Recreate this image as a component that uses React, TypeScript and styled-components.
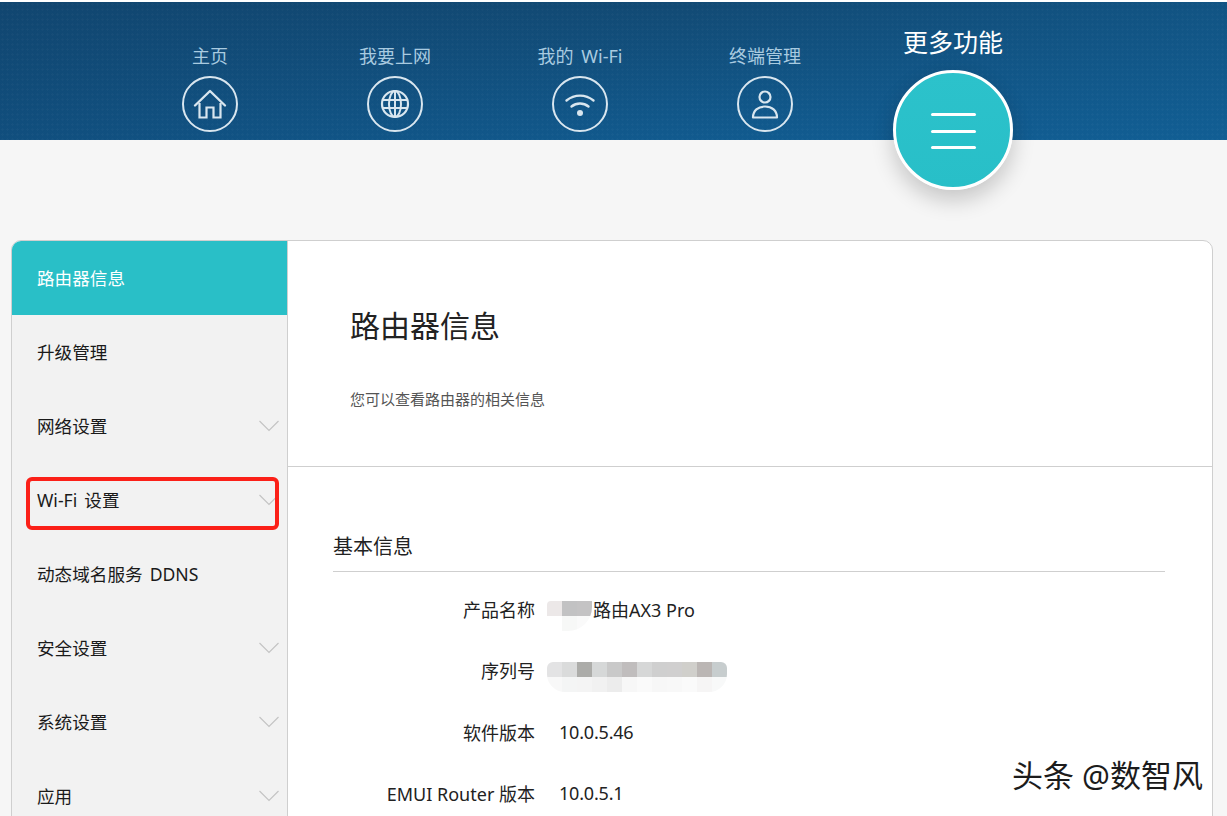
import React from 'react';
import styled, { createGlobalStyle } from 'styled-components';

const FONT = `"Noto Sans", "Noto Sans CJK SC", sans-serif`;

const GlobalStyle = createGlobalStyle`
  html, body {
    margin: 0;
    padding: 0;
    height: 100%;
    overflow: hidden;
    background: #f6f6f6;
    font-family: ${FONT};
  }
`;

const Page = styled.div`
  position: relative;
  height: 816px;
  overflow: hidden;
  padding-top: 2px;
  box-sizing: border-box;
  background: #fff;
`;

const Body = styled.div`
  background: #f6f6f6;
  height: 814px;
`;

const Header = styled.header`
  display: grid;
  grid-template-columns: repeat(5, 185px);
  height: 138px;
  padding-left: 117px;
  box-sizing: border-box;
  background-color: #115a8e;
  background-image:
    radial-gradient(rgba(255, 255, 255, 0.022) 1px, transparent 1.4px),
    linear-gradient(100deg, rgba(16, 66, 108, 0.5) 0%, rgba(17, 90, 142, 0) 55%, rgba(17, 100, 156, 0.4) 100%),
    linear-gradient(180deg, #124a74 0%, #115a8e 100%);
  background-size: 5px 5px, 100% 100%, 100% 100%;
`;

const NavItem = styled.div`
  display: flex;
  flex-direction: column;
  align-items: center;
  padding-top: 41px;
`;

const NavLabel = styled.div`
  font-size: 18px;
  line-height: 26px;
  height: 26px;
  padding-left: 1px;
  word-spacing: 3px;
  color: #a9cbe0;
  white-space: nowrap;
`;

const NavCircle = styled.div`
  width: 56px;
  height: 56px;
  margin-top: 7px;
  color: #d9e6ef;
`;

const MoreItem = styled.div`
  display: flex;
  flex-direction: column;
  align-items: center;
  padding: 22px 0 0 7px;
  position: relative;
  z-index: 1;
`;

const MoreLabel = styled.div`
  font-size: 25px;
  line-height: 36px;
  color: #fff;
  white-space: nowrap;
`;

const MoreButton = styled.div`
  width: 120px;
  height: 120px;
  flex: none;
  margin-top: 10px;
  box-sizing: border-box;
  border: 3px solid #fff;
  border-radius: 50%;
  background: linear-gradient(180deg, #2cc2cb 0%, #28bfc8 100%);
  box-shadow: 0 10px 22px rgba(0, 0, 0, 0.2);
  display: flex;
  flex-direction: column;
  align-items: center;
  justify-content: center;
  gap: 13.3px;
  padding-top: 2px;
`;

const MoreBar = styled.span`
  display: block;
  width: 45px;
  height: 3px;
  border-radius: 2px;
  background: #fff;
`;

const Card = styled.main`
  display: grid;
  grid-template-columns: 276px 1fr;
  margin: 100px 14px 0 11px;
  height: 700px;
  box-sizing: border-box;
  background: #fff;
  border: 1px solid #cfcfcf;
  border-radius: 10px;
  overflow: hidden;
`;

const Sidebar = styled.nav`
  background: #f2f2f2;
  border-right: 1px solid #cfcfcf;
`;

const SideItem = styled.div<{ $active?: boolean }>`
  position: relative;
  display: flex;
  align-items: center;
  justify-content: space-between;
  height: 74px;
  box-sizing: border-box;
  padding: 0 8px 2px 25px;
  font-size: 17.6px;
  word-spacing: 2.5px;
  color: ${(p) => (p.$active ? '#fff' : '#1a1a1a')};
  background: ${(p) => (p.$active ? '#29bfc7' : 'transparent')};
`;

const Highlight = styled.div`
  position: absolute;
  left: 14px;
  right: 8px;
  top: 14px;
  bottom: 7px;
  border: 4px solid #fb2018;
  border-radius: 6px;
`;

const ChevronSvg = styled.svg`
  margin-top: 2px;
  fill: none;
  stroke: #c4c4c4;
  stroke-width: 1.2;
`;

const Content = styled.section`
  min-width: 0;
`;

const Intro = styled.div`
  height: 226px;
  box-sizing: border-box;
  padding: 61px 0 0 62px;
  border-bottom: 1px solid #cfcfcf;
`;

const Title = styled.h1`
  margin: 0;
  font-size: 30px;
  font-weight: 400;
  line-height: 48px;
  color: #222;
`;

const Subtitle = styled.p`
  margin: 38px 0 0;
  font-size: 15px;
  line-height: 22px;
  color: #555;
`;

const Section = styled.div`
  margin: 60px 47px 0 45px;
`;

const SectionTitle = styled.h2`
  margin: 0;
  height: 45px;
  box-sizing: border-box;
  font-size: 20px;
  font-weight: 400;
  line-height: 40px;
  color: #222;
  border-bottom: 1px solid #cfcfcf;
`;

const InfoList = styled.div`
  padding-top: 6.5px;
`;

const InfoRow = styled.div`
  display: grid;
  grid-template-columns: 202px 1fr;
  column-gap: 12px;
  align-items: center;
  height: 61.3px;
  font-size: 18px;
  color: #222;
`;

const InfoLabel = styled.div`
  text-align: right;
  white-space: nowrap;
`;

const InfoValue = styled.div<{ $flush?: boolean }>`
  display: flex;
  align-items: center;
  padding-left: ${(p) => (p.$flush ? 0 : 12)}px;
  letter-spacing: ${(p) => (p.$flush ? 0 : -0.2)}px;
  white-space: nowrap;
`;

const Mosaic = styled.div<{ $cols: number }>`
  display: grid;
  grid-template-columns: repeat(${(p) => p.$cols}, 15px);
  grid-auto-rows: 15px;
  margin-top: 14px;
  border-radius: 6px 6px 18px 18px;
  overflow: hidden;
`;

const MosaicCell = styled.span<{ $color: string }>`
  background: ${(p) => p.$color};
`;

const NameMosaic = styled(Mosaic)`
  margin-right: 1px;
  border-radius: 4px 0 24px 0;
  align-self: flex-start;
`;

const Watermark = styled.div`
  position: absolute;
  right: 24px;
  bottom: 22px;
  font-size: 31px;
  line-height: 38px;
  color: #1c1c1c;
  white-space: nowrap;
  text-shadow: 0 0 2px #fff, 1px 1px 1px #fff;
`;

const HomeIcon = () => (
  <svg viewBox="0 0 56 56" fill="none" stroke="currentColor" strokeWidth="2" width="56" height="56">
    <circle cx="28" cy="28" r="27" />
    <path d="M13 29.5 28 15l15 14.5" strokeWidth="2.4" strokeLinejoin="round" strokeLinecap="round" />
    <path d="M17.5 27v14.5h7V31.5h7v10h7V27" strokeWidth="2.2" />
  </svg>
);

const GlobeIcon = () => (
  <svg viewBox="0 0 56 56" fill="none" stroke="currentColor" strokeWidth="2" width="56" height="56">
    <circle cx="28" cy="28" r="27" />
    <circle cx="28" cy="28" r="13" strokeWidth="2.2" />
    <ellipse cx="28" cy="28" rx="6" ry="13" />
    <path d="M28 15v26M15.5 24h25M15.5 32h25" />
  </svg>
);

const WifiIcon = () => (
  <svg viewBox="0 0 56 56" fill="none" stroke="currentColor" strokeWidth="2" width="56" height="56">
    <circle cx="28" cy="28" r="27" />
    <path d="M14.5 24.5c8-6.5 19-6.5 27 0" strokeWidth="2.4" strokeLinecap="round" />
    <path d="M19.5 30.5c5-4 12-4 17 0" strokeWidth="2.4" strokeLinecap="round" />
    <circle cx="28" cy="37" r="3" fill="currentColor" stroke="none" />
  </svg>
);

const UserIcon = () => (
  <svg viewBox="0 0 56 56" fill="none" stroke="currentColor" strokeWidth="2" width="56" height="56">
    <circle cx="28" cy="28" r="27" />
    <circle cx="28" cy="21" r="5.5" strokeWidth="2.2" />
    <path d="M16 41.5c0-7 5-11 12-11s12 4 12 11z" strokeWidth="2.2" strokeLinejoin="round" />
  </svg>
);

const Chevron = () => (
  <ChevronSvg viewBox="0 0 20 12" width="20" height="12">
    <path d="M0.5 1 10 10.5 19.5 1" />
  </ChevronSvg>
);

const navItems = [
  { label: '主页', icon: <HomeIcon /> },
  { label: '我要上网', icon: <GlobeIcon /> },
  { label: '我的 Wi-Fi', icon: <WifiIcon /> },
  { label: '终端管理', icon: <UserIcon /> },
];

const sideItems = [
  { label: '路由器信息', active: true },
  { label: '升级管理' },
  { label: '网络设置', arrow: true },
  { label: 'Wi-Fi 设置', arrow: true, marked: true },
  { label: '动态域名服务 DDNS' },
  { label: '安全设置', arrow: true },
  { label: '系统设置', arrow: true },
  { label: '应用', arrow: true },
];

const nameCells = ['#ece8e8', '#c2c2c3', '#c4c3c4', '#ffffff', '#f7f8f7', '#fafafa'];
const serialCells = [
  '#e3e3e4', '#dadbdb', '#acaca9', '#d6d8d8', '#c9c9c9', '#c0bdbd', '#d6d7d7', '#cfcfcf', '#d0cfcf', '#d0cfcb', '#bbb6b4', '#c7cdce',
  '#f8f8f8', '#f4f5f5', '#f4f4f4', '#f1f1f1', '#ececec', '#f7f7f7', '#fafafa', '#f7f7f7', '#f8f8f8', '#fafafa', '#f6f5f5', '#f8f9f9',
];

export default function App() {
  return (
    <Page>
      <GlobalStyle />
      <Body>
        <Header>
          {navItems.map((item) => (
            <NavItem key={item.label}>
              <NavLabel>{item.label}</NavLabel>
              <NavCircle>{item.icon}</NavCircle>
            </NavItem>
          ))}
          <MoreItem>
            <MoreLabel>更多功能</MoreLabel>
            <MoreButton>
              <MoreBar />
              <MoreBar />
              <MoreBar />
            </MoreButton>
          </MoreItem>
        </Header>
        <Card>
          <Sidebar>
            {sideItems.map((item) => (
              <SideItem key={item.label} $active={item.active}>
                {item.label}
                {item.arrow && <Chevron />}
                {item.marked && <Highlight />}
              </SideItem>
            ))}
          </Sidebar>
          <Content>
            <Intro>
              <Title>路由器信息</Title>
              <Subtitle>您可以查看路由器的相关信息</Subtitle>
            </Intro>
            <Section>
              <SectionTitle>基本信息</SectionTitle>
              <InfoList>
                <InfoRow>
                  <InfoLabel>产品名称</InfoLabel>
                  <InfoValue $flush>
                    <NameMosaic $cols={3}>
                      {nameCells.map((c, i) => (
                        <MosaicCell key={i} $color={c} />
                      ))}
                    </NameMosaic>
                    路由AX3 Pro
                  </InfoValue>
                </InfoRow>
                <InfoRow>
                  <InfoLabel>序列号</InfoLabel>
                  <InfoValue $flush>
                    <Mosaic $cols={12}>
                      {serialCells.map((c, i) => (
                        <MosaicCell key={i} $color={c} />
                      ))}
                    </Mosaic>
                  </InfoValue>
                </InfoRow>
                <InfoRow>
                  <InfoLabel>软件版本</InfoLabel>
                  <InfoValue>10.0.5.46</InfoValue>
                </InfoRow>
                <InfoRow>
                  <InfoLabel>EMUI Router 版本</InfoLabel>
                  <InfoValue>10.0.5.1</InfoValue>
                </InfoRow>
              </InfoList>
            </Section>
          </Content>
        </Card>
      </Body>
      <Watermark>头条 @数智风</Watermark>
    </Page>
  );
}
